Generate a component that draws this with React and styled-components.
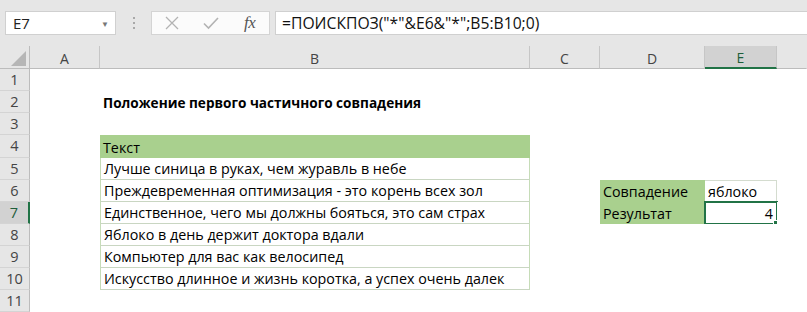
import React from 'react';
import styled, { createGlobalStyle, css } from 'styled-components';

const GlobalStyle = createGlobalStyle`
  body {
    margin: 0;
    background: #ffffff;
    overflow: hidden;
    font-family: "Open Sans", "Noto Sans", sans-serif;
    color: #000;
  }
`;

const COLS = [
  { key: 'A', width: 70 },
  { key: 'B', width: 430 },
  { key: 'C', width: 70 },
  { key: 'D', width: 105 },
  { key: 'E', width: 72 },
];

const boxed = (text) => ({ text, boxed: true });

const ROWS = [
  {},
  { B: { text: 'Положение первого частичного совпадения', bold: true } },
  {},
  { B: { text: 'Текст', fill: true } },
  { B: boxed('Лучше синица в руках, чем журавль в небе') },
  {
    B: boxed('Преждевременная оптимизация - это корень всех зол'),
    D: { text: 'Совпадение', fill: true },
    E: { text: 'яблоко', framed: true },
  },
  {
    B: boxed('Единственное, чего мы должны бояться, это сам страх'),
    D: { text: 'Результат', fill: true },
    E: { text: '4', align: 'right', selected: true },
  },
  { B: boxed('Яблоко в день держит доктора вдали') },
  { B: boxed('Компьютер для вас как велосипед') },
  { B: boxed('Искусство длинное и жизнь коротка, а успех очень далек') },
  {},
];

const ACTIVE_COL = 'E';
const ACTIVE_ROW = 7;

const Toolbar = styled.div`
  display: flex;
  align-items: center;
  height: 46px;
  padding-left: 5px;
  background: #e6e6e6;
  box-sizing: border-box;
`;

const NameBox = styled.div`
  display: flex;
  align-items: center;
  justify-content: space-between;
  width: 111px;
  height: 24px;
  padding: 0 6px 0 7px;
  box-sizing: border-box;
  background: #fff;
  border: 1px solid #d0d0d0;
  font-size: 15px;
  color: #222;
`;

const Caret = styled.span`
  font-size: 8px;
  color: #777;
`;

const Grip = styled.div`
  display: flex;
  flex-direction: column;
  align-items: center;
  justify-content: center;
  gap: 3px;
  width: 35px;

  span {
    width: 2px;
    height: 2px;
    background: #a8a8a8;
  }
`;

const ButtonBox = styled.div`
  display: flex;
  align-items: center;
  width: 119px;
  height: 24px;
  padding-left: 1px;
  box-sizing: border-box;
  background: #fbfbfb;
  border: 1px solid #d4d4d4;
`;

const ToolButton = styled.div`
  display: flex;
  align-items: center;
  justify-content: center;
  width: 39px;
  height: 100%;
`;

const Fx = styled.span`
  font-family: "Liberation Serif", "DejaVu Serif", serif;
  font-style: italic;
  font-size: 17px;
  color: #555;
  letter-spacing: -0.5px;
`;

const FormulaBox = styled.div`
  flex: 1;
  display: flex;
  align-items: center;
  height: 24px;
  margin-left: 5px;
  padding-left: 6px;
  box-sizing: border-box;
  background: #fff;
  border: 1px solid #d0d0d0;
  border-right: none;
  font-size: 15.7px;
  color: #111;
  white-space: nowrap;
`;

const Sheet = styled.div`
  display: grid;
  grid-template-columns: 30px ${COLS.map((c) => `${c.width}px`).join(' ')} 1fr;
  grid-template-rows: 23px repeat(11, 22.14px);
`;

const Corner = styled.div`
  background: #e6e6e6;
  border-right: 1px solid #bcbcbc;
  border-bottom: 1px solid #bcbcbc;
  box-sizing: border-box;
  display: flex;
  align-items: flex-end;
  justify-content: flex-end;
  padding: 0 3px 2px 0;
`;

const ColHead = styled.div`
  display: flex;
  align-items: center;
  justify-content: center;
  box-sizing: border-box;
  font-size: 14px;
  padding-top: 2px;
  background: ${(p) => (p.$active ? '#d2d2d2' : '#e6e6e6')};
  color: ${(p) => (p.$active ? '#1e5e3a' : '#444')};
  border-right: 1px solid ${(p) => (p.$last ? 'transparent' : '#c6c6c6')};
  border-bottom: ${(p) => (p.$active ? '2px solid #217346' : '1px solid #bcbcbc')};
`;

const RowHead = styled.div`
  display: flex;
  align-items: center;
  justify-content: center;
  box-sizing: border-box;
  font-size: 14.5px;
  background: ${(p) => (p.$active ? '#d2d2d2' : '#e6e6e6')};
  color: ${(p) => (p.$active ? '#1e5e3a' : '#444')};
  border-bottom: 1px solid #d4d4d4;
  border-right: ${(p) => (p.$active ? '2px solid #217346' : '1px solid #bcbcbc')};
`;

const Cell = styled.div`
  position: relative;
  display: flex;
  align-items: flex-end;
  justify-content: ${(p) => (p.$align === 'right' ? 'flex-end' : 'flex-start')};
  box-sizing: border-box;
  padding: 0 4px 0 3px;
  font-size: ${(p) => (p.$bold ? '13.6px' : '14.3px')};
  line-height: 21px;
  font-weight: ${(p) => (p.$bold ? 700 : 400)};
  background: ${(p) => (p.$fill ? '#a9d08e' : '#fff')};
  white-space: nowrap;

  ${(p) =>
    p.$boxed &&
    css`
      border-left: 1px solid #c6dcb8;
      border-right: 1px solid #c6dcb8;
      border-bottom: 1px solid #c9d6c2;
    `}

  ${(p) =>
    p.$framed &&
    css`
      border-top: 1px solid #d4dccf;
      border-right: 1px solid #d4dccf;
    `}
`;

const Selection = styled.div`
  position: absolute;
  inset: -1px -1px -1px -1px;
  border: 2px solid #217346;
  pointer-events: none;
`;

const Handle = styled.div`
  position: absolute;
  right: -4px;
  bottom: -4px;
  width: 5px;
  height: 5px;
  background: #217346;
  border: 1px solid #fff;
`;

const Triangle = () => (
  <svg width="15" height="15" viewBox="0 0 15 15">
    <polygon points="15,0 15,15 0,15" fill="#b6b6b6" />
  </svg>
);

const CrossIcon = () => (
  <svg width="14" height="14" viewBox="0 0 14 14">
    <path d="M1 1 L13 13 M13 1 L1 13" stroke="#b3b3b3" strokeWidth="1.3" fill="none" />
  </svg>
);

const CheckIcon = () => (
  <svg width="16" height="14" viewBox="0 0 16 14">
    <path d="M1 7.5 L5.5 12 L15 2" stroke="#b3b3b3" strokeWidth="1.6" fill="none" />
  </svg>
);

const App = () => {
  return (
    <>
      <GlobalStyle />
      <Toolbar>
        <NameBox>
          E7
          <Caret>▼</Caret>
        </NameBox>
        <Grip>
          <span />
          <span />
          <span />
        </Grip>
        <ButtonBox>
          <ToolButton>
            <CrossIcon />
          </ToolButton>
          <ToolButton>
            <CheckIcon />
          </ToolButton>
          <ToolButton>
            <Fx>fx</Fx>
          </ToolButton>
        </ButtonBox>
        <FormulaBox>=ПОИСКПОЗ("*"&amp;E6&amp;"*";B5:B10;0)</FormulaBox>
      </Toolbar>

      <Sheet>
        <Corner>
          <Triangle />
        </Corner>
        {COLS.map((c) => (
          <ColHead key={c.key} $active={c.key === ACTIVE_COL}>
            {c.key}
          </ColHead>
        ))}
        <ColHead $last />

        {ROWS.map((row, i) => {
          const n = i + 1;
          return (
            <React.Fragment key={n}>
              <RowHead $active={n === ACTIVE_ROW}>{n}</RowHead>
              {COLS.map((c) => {
                const cell = row[c.key] || {};
                return (
                  <Cell
                    key={c.key}
                    $bold={cell.bold}
                    $fill={cell.fill}
                    $boxed={cell.boxed}
                    $framed={cell.framed}
                    $align={cell.align}
                  >
                    {cell.text}
                    {cell.selected && (
                      <Selection>
                        <Handle />
                      </Selection>
                    )}
                  </Cell>
                );
              })}
              <Cell />
            </React.Fragment>
          );
        })}
      </Sheet>
    </>
  );
};

export default App;
